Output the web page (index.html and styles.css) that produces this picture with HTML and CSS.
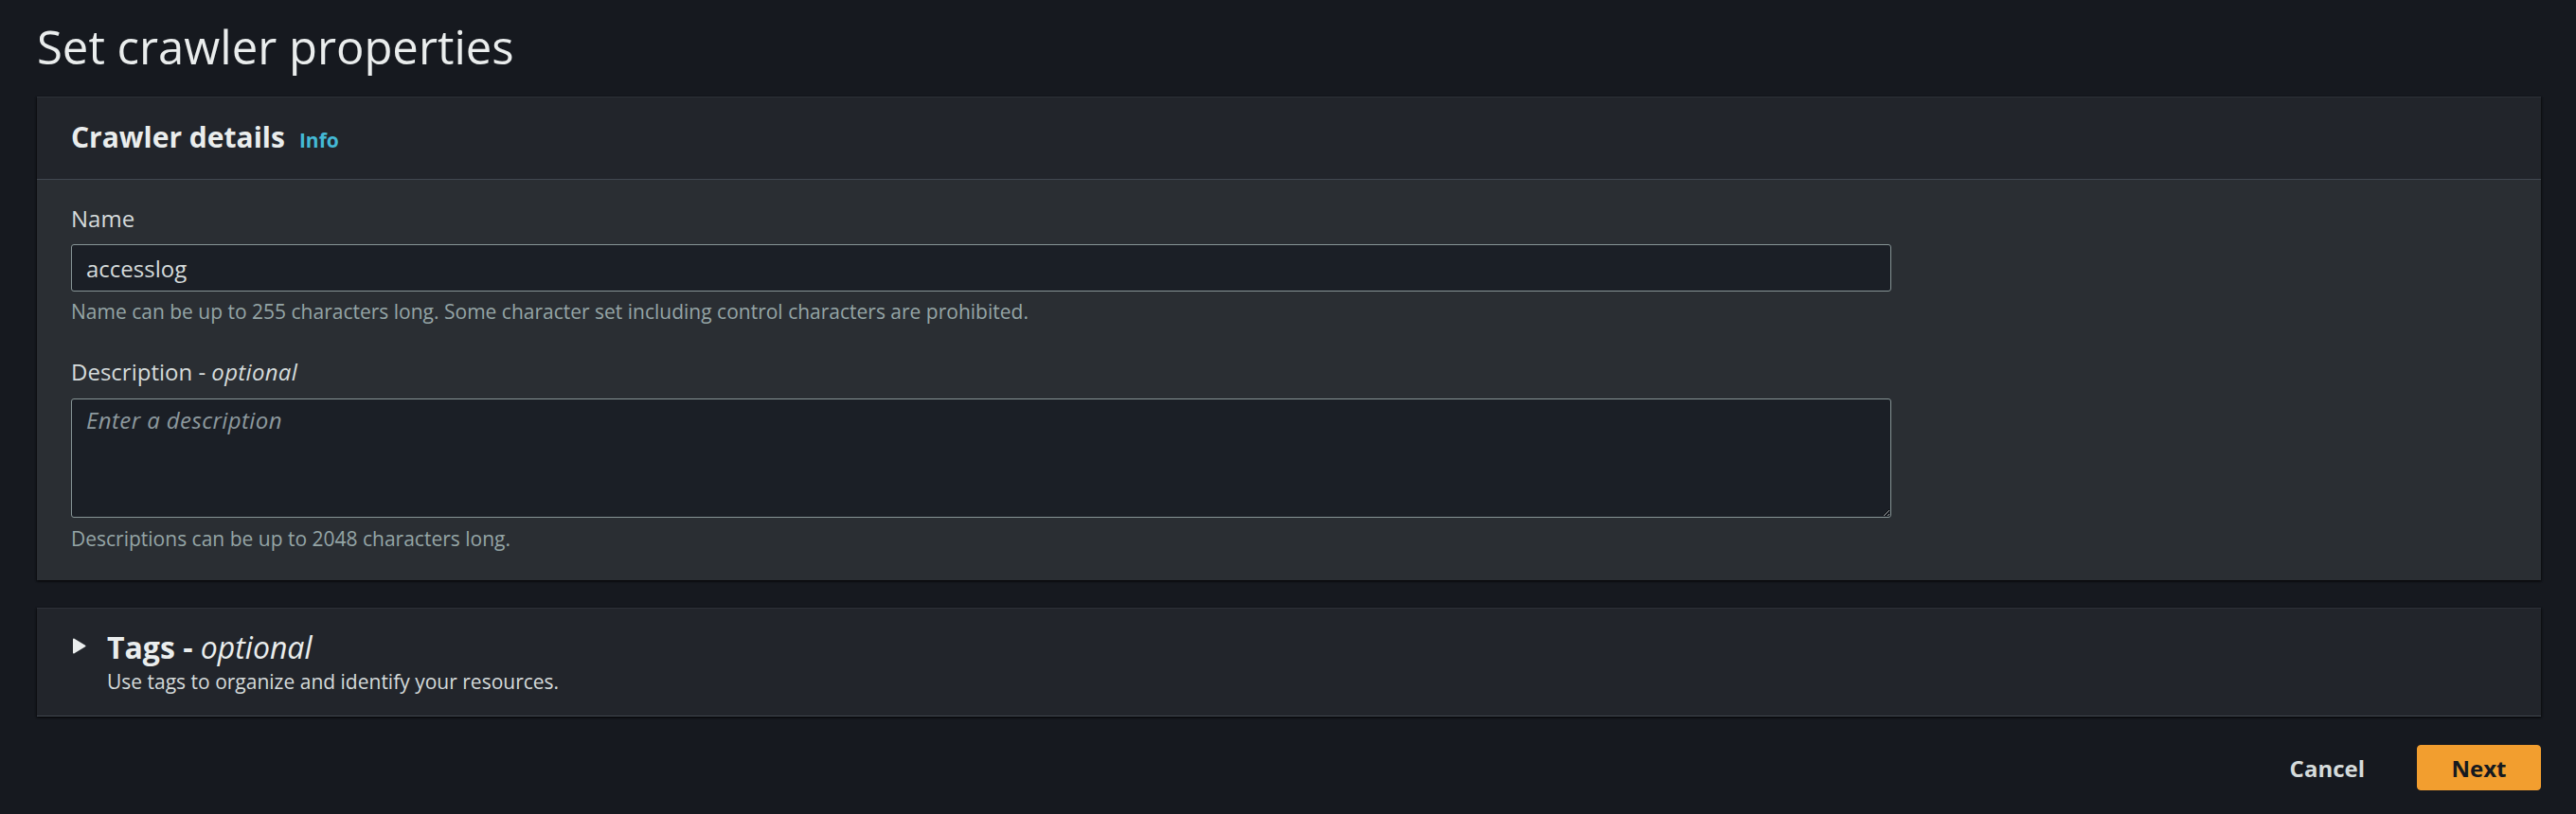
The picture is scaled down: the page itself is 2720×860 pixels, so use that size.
FILE: index.html
```html
<!DOCTYPE html>
<html lang="en">
<head>
<meta charset="utf-8">
<title>Set crawler properties</title>
<link rel="stylesheet" href="styles.css">
</head>
<body>
<main class="page">
  <h1 class="page-title">Set crawler properties</h1>

  <section class="card">
    <header class="card-header">
      <h2 class="card-title">Crawler details</h2>
      <a class="info-link" href="#">Info</a>
    </header>
    <div class="card-body">
      <div class="field">
        <label class="field-label" for="name">Name</label>
        <input class="text-input" id="name" type="text" value="accesslog">
        <p class="field-hint">Name can be up to 255 characters long. Some character set including control characters are prohibited.</p>
      </div>
      <div class="field field-gap">
        <label class="field-label" for="desc">Description - <i>optional</i></label>
        <textarea class="text-area" id="desc" placeholder="Enter a description"></textarea>
        <p class="field-hint field-hint-area">Descriptions can be up to 2048 characters long.</p>
      </div>
    </div>
  </section>

  <section class="card card-expandable">
    <div class="expander">
      <svg class="caret" width="15" height="17" viewBox="0 0 15 17" aria-hidden="true">
        <path d="M2 1.5 L13.5 8.5 L2 15.5 Z" fill="#eaeded" stroke="#eaeded" stroke-width="2" stroke-linejoin="round"/>
      </svg>
      <div class="expander-text">
        <h2 class="expander-title">Tags - <i>optional</i></h2>
        <p class="expander-desc">Use tags to organize and identify your resources.</p>
      </div>
    </div>
  </section>

  <div class="actions">
    <button class="btn btn-link" type="button">Cancel</button>
    <button class="btn btn-primary" type="button">Next</button>
  </div>
</main>
</body>
</html>
```

FILE: styles.css
```css
html, body {
  margin: 0;
  padding: 0;
  background: #16191f;
}

body {
  font-family: "Open Sans", "Noto Sans", sans-serif;
  color: #d5dbdb;
  width: 2720px;
  height: 860px;
  overflow: hidden;
}

.page {
  padding: 19px 37px 0 39px;
  display: flex;
  flex-direction: column;
}

.page-title {
  margin: 0 0 23px 0;
  font-size: 49px;
  line-height: 60px;
  font-weight: 400;
  color: #eaeded;
}

.card {
  background: #2a2e33;
  box-shadow: 0 1px 2px 0 rgba(0, 0, 0, 0.55), 1px 1px 2px 0 rgba(0, 0, 0, 0.3), -1px 1px 2px 0 rgba(0, 0, 0, 0.3);
  margin-bottom: 29px;
}

.card-header {
  height: 86px;
  box-sizing: content-box;
  border-top: 1px solid #2d3138;
  border-bottom: 1px solid #414750;
  background: #22252b;
  display: flex;
  align-items: baseline;
  padding: 0 36px;
}

.card-title {
  margin: 0;
  font-size: 30px;
  line-height: 84px;
  font-weight: 700;
  color: #eaeded;
}

.info-link {
  margin-left: 15px;
  font-size: 21px;
  font-weight: 700;
  color: #44b9d6;
  text-decoration: none;
}

.card-body {
  padding: 25px 36px 30px 36px;
  display: flex;
  flex-direction: column;
}

.field {
  display: flex;
  flex-direction: column;
}

.field-gap {
  margin-top: 34px;
}

.field-label {
  font-size: 24px;
  line-height: 32px;
  color: #d5dbdb;
}

.field-label i {
  font-style: italic;
  letter-spacing: 0.3px;
}

.text-input {
  margin-top: 11px;
  width: 1922px;
  height: 50px;
  box-sizing: border-box;
  padding: 0 15px;
  font-family: inherit;
  font-size: 24px;
  color: #d5dbdb;
  background: #1b1f26;
  border: 1px solid #879596;
  border-radius: 3px;
  outline: none;
}

.text-area {
  margin-top: 12px;
  width: 1922px;
  height: 126px;
  box-sizing: border-box;
  padding: 6px 15px;
  font-family: inherit;
  font-size: 24px;
  line-height: 32px;
  color: #d5dbdb;
  background: #1b1f26;
  border: 1px solid #879596;
  border-radius: 3px;
  outline: none;
  resize: vertical;
  color-scheme: dark;
}

.text-area::placeholder {
  font-style: italic;
  letter-spacing: 0.4px;
  color: #8d999e;
}

.field-hint {
  margin: 7px 0 0 0;
  font-size: 21px;
  line-height: 28px;
  color: #95a5a6;
}

.field-hint-area {
  margin-top: 8px;
}

.card-expandable {
  background: #22252b;
  border-top: 1px solid #2d3138;
  border-bottom: 1px solid #414750;
  margin-bottom: 0;
}

.expander {
  display: flex;
  align-items: flex-start;
  padding: 21px 37px 22px 37px;
}

.caret {
  display: block;
  margin-top: 10px;
  margin-right: 22px;
  flex: none;
}

.expander-text {
  display: flex;
  flex-direction: column;
}

.expander-title {
  margin: 0;
  font-size: 32px;
  line-height: 40px;
  font-weight: 700;
  color: #eaeded;
}

.expander-title i {
  font-weight: 400;
}

.expander-desc {
  margin: 2px 0 0 0;
  font-size: 21px;
  line-height: 28px;
  color: #d5dbdb;
}

.actions {
  margin-top: 30px;
  display: flex;
  justify-content: flex-end;
  gap: 18px;
}

.btn {
  height: 48px;
  padding: 0 36px;
  font-family: inherit;
  font-size: 24px;
  font-weight: 700;
  border-radius: 4px;
  cursor: pointer;
}

.btn-link {
  background: transparent;
  border: 1px solid transparent;
  color: #d5dbdb;
}

.btn-primary {
  width: 131px;
  padding: 0;
  background: #f29e2f;
  border: 1px solid #f29e2f;
  color: #16191f;
}
```
